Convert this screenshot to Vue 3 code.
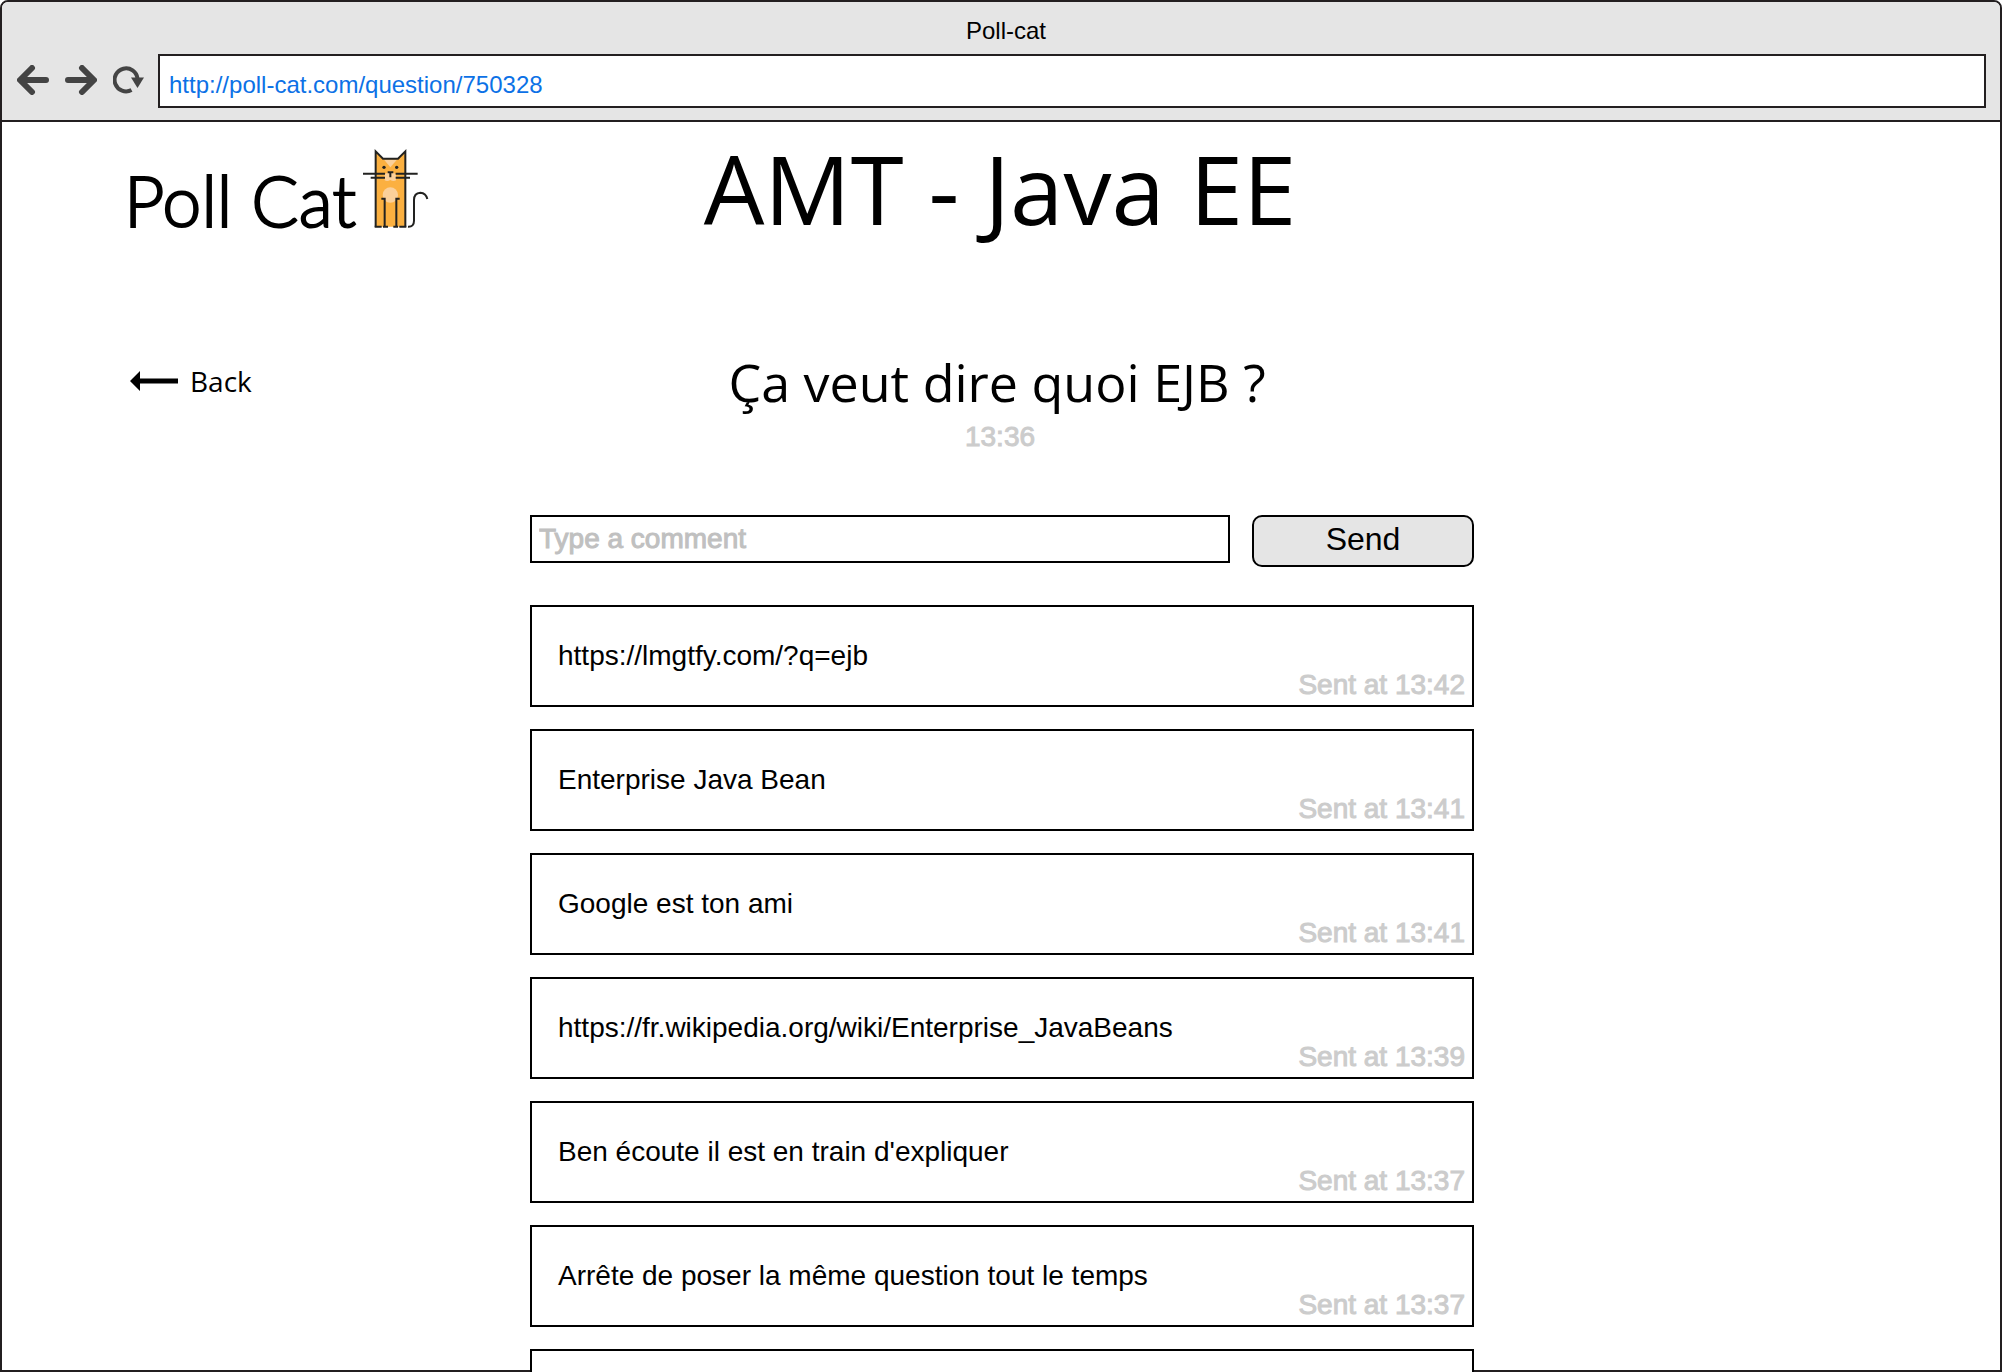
<script setup>
import { ref } from 'vue'

const address = ref('http://poll-cat.com/question/750328')
const draft = ref('')

const comments = [
  { text: 'https://lmgtfy.com/?q=ejb', time: '13:42' },
  { text: 'Enterprise Java Bean', time: '13:41' },
  { text: 'Google est ton ami', time: '13:41' },
  { text: 'https://fr.wikipedia.org/wiki/Enterprise_JavaBeans', time: '13:39' },
  { text: "Ben écoute il est en train d'expliquer", time: '13:37' },
  { text: 'Arrête de poser la même question tout le temps', time: '13:37' },
  { text: '', time: '' },
]
</script>

<template>
  <div class="viewport">
    <div class="window">
      <div class="chrome">
        <div class="window-title">Poll-cat</div>
        <div class="toolbar">
          <button class="nav" type="button" aria-label="Previous page">
            <svg width="32" height="30" viewBox="0 0 32 30">
              <path d="M15 3 3 15l12 12M5 15h24" />
            </svg>
          </button>
          <button class="nav" type="button" aria-label="Next page">
            <svg width="32" height="30" viewBox="0 0 32 30">
              <path d="M17 3l12 12-12 12M27 15H3" />
            </svg>
          </button>
          <button class="nav" type="button" aria-label="Reload">
            <svg width="32" height="30" viewBox="0 0 32 30">
              <path class="ring" d="M18.500 25A11.500 11.500 0 1 1 24.500 13.500" />
              <path class="head" d="M18 12.500h13L24.500 23z" />
            </svg>
          </button>
          <input v-model="address" class="address" type="text" aria-label="Address" />
        </div>
      </div>

      <main class="page">
        <header class="masthead">
          <a class="logo" href="#">
            <span>Poll Cat</span>
            <svg width="68" height="82" viewBox="36 24 204 246" aria-hidden="true">
              <path fill="#fbb040" d="M77 37l22 24h45l22-24v226H77z" />
              <path fill="#fbd09a" d="M103 63h37l-19 22z" />
              <path fill="#fbd09a" d="M121 96l17 10v18q-8 4-17-1-9 5-17 1v-18z" />
              <circle cx="121" cy="168" r="23" fill="#fbd09a" />
              <g fill="none" stroke="#222220" stroke-width="6">
                <path d="M77 263V37l22 22h45l22-22v226" />
                <path d="M39 104h66M137 104h66M62 116h43M137 116h43" />
                <path d="M113 100h17M121 100v15" />
                <path d="M94 179h10v84M149 179h-10v84" />
                <path d="M74 263h21M99 263h15M130 263h14M148 263h21" />
                <path d="M174 263q18 1 18-18v-62q0-21 19-22 17 1 21 19" />
              </g>
              <circle cx="102" cy="85" r="5" fill="#222220" />
              <circle cx="140" cy="85" r="5" fill="#222220" />
            </svg>
          </a>
          <h1>AMT - Java EE</h1>
        </header>

        <section class="question">
          <a class="back" href="#">
            <svg width="48" height="20" viewBox="0 0 48 20" aria-hidden="true">
              <path d="M0 10 10 0v7.500h38v5H10V20z" />
            </svg>
            Back
          </a>
          <div class="prompt">
            <h2>Ça veut dire quoi EJB ?</h2>
            <time>13:36</time>
          </div>
        </section>

        <section class="thread">
          <form class="composer" @submit.prevent>
            <input v-model="draft" type="text" placeholder="Type a comment" aria-label="Comment" />
            <button type="submit">Send</button>
          </form>
          <ul class="comments">
            <li v-for="(comment, i) in comments" :key="i">
              <p>{{ comment.text }}</p>
              <time v-if="comment.time">Sent at {{ comment.time }}</time>
            </li>
          </ul>
        </section>
      </main>
    </div>
  </div>
</template>

<style>
body {
  background: #fff;
}
</style>

<style scoped>
.viewport,
.viewport * {
  box-sizing: border-box;
}
.viewport {
  height: 100vh;
  overflow: hidden;
  font-family: "Liberation Sans", Arial, sans-serif;
  font-size: 28px;
  line-height: 28px;
  color: #000;
}
.window {
  height: 100%;
  border: 2px solid #231f20;
  border-radius: 8px 8px 0 0;
}
.chrome {
  background: #e5e5e5;
  border-bottom: 2px solid #231f20;
  border-radius: 6px 6px 0 0;
  padding: 12px 14px 12px;
  font-size: 24px;
}
.window-title {
  height: 40px;
  line-height: 34px;
  padding-left: 10px;
  text-align: center;
}
.toolbar {
  display: flex;
  align-items: center;
  gap: 16px;
}
.nav {
  display: flex;
  padding: 0 0 2px;
  border: 0;
  background: none;
}
.nav path {
  fill: none;
  stroke: #444;
  stroke-width: 6;
  stroke-linecap: round;
  stroke-linejoin: round;
}
.nav .ring {
  stroke-width: 4;
  stroke-linecap: butt;
}
.nav .head {
  fill: #444;
  stroke: none;
}
.nav svg {
  margin-left: 1px;
  margin-right: -1px;
}
.address {
  flex: 1;
  min-width: 0;
  height: 54px;
  margin-left: -2px;
  padding: 8px 9px 0;
  border: 2px solid #231f20;
  border-radius: 0;
  background: #fff;
  color: #0c71e6;
  font: inherit;
}
.page {
  padding: 18px 126px 0 128px;
}
.masthead,
.question {
  display: grid;
  grid-template-columns: 1fr auto 1fr;
}
.masthead {
  padding-right: 4px;
}
.logo {
  display: flex;
  align-items: flex-start;
  padding-top: 7px;
  color: #000;
  text-decoration: none;
}
.logo span {
  width: 238px;
  margin-left: -6px;
  font-family: Lato, sans-serif;
  font-size: 70px;
  font-weight: 300;
  line-height: 106px;
  white-space: nowrap;
  -webkit-text-stroke: 2px #000;
}
h1,
h2,
p,
ul {
  margin: 0;
  padding: 0;
  font-weight: 400;
}
h1,
h2,
.back {
  font-family: "Open Sans", "Noto Sans", sans-serif;
}
h1 {
  font-size: 96px;
  line-height: 96px;
}
.question {
  margin-top: 100px;
  padding-right: 10px;
}
.back {
  display: flex;
  align-items: center;
  justify-self: start;
  gap: 12px;
  height: 56px;
  color: #000;
  text-decoration: none;
}
.prompt {
  text-align: center;
}
h2 {
  font-size: 52px;
  line-height: 58px;
}
time {
  color: #ccc;
  -webkit-text-stroke: 1px #ccc;
}
.prompt time {
  display: block;
  padding: 12px 0 0 6px;
}
.thread {
  max-width: 944px;
  margin: 64px auto 0;
}
.composer {
  display: flex;
  align-items: flex-start;
  gap: 22px;
}
.composer input {
  flex: 1;
  min-width: 0;
  height: 48px;
  padding: 0 7px;
  border: 2px solid #000;
  border-radius: 0;
  background: #fff;
  font: inherit;
}
.composer input::placeholder {
  color: #c0c0c0;
  -webkit-text-stroke: 1px #c0c0c0;
  opacity: 1;
}
.composer button {
  width: 222px;
  height: 52px;
  padding: 0 0 4px;
  border: 2px solid #000;
  border-radius: 10px;
  background: #e5e5e5;
  color: #000;
  font: inherit;
  font-size: 32px;
}
.comments {
  display: flex;
  flex-direction: column;
  gap: 22px;
  margin-top: 38px;
  list-style: none;
}
.comments li {
  display: flex;
  align-items: center;
  justify-content: space-between;
  height: 102px;
  padding: 0 7px 0 26px;
  border: 2px solid #000;
  background: #fff;
}
.comments time {
  align-self: flex-end;
  padding-bottom: 6px;
}
</style>
